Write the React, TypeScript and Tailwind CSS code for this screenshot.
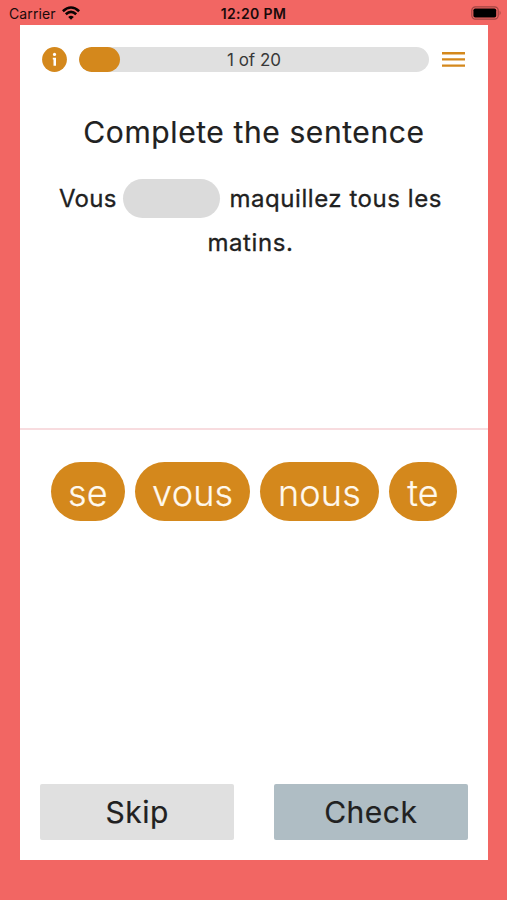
import React from "react";

const chips = [
  { word: "se", width: "w-[74.5px]" },
  { word: "vous", width: "w-[115px]" },
  { word: "nous", width: "w-[118.5px]" },
  { word: "te", width: "w-[68.5px]" },
];

function StatusBar() {
  return (
    <header className="grid h-[25px] grid-cols-3 items-center pt-[3px] text-[14px] leading-[22px] text-[#1a0b0b]">
      <div className="flex items-center gap-[6px] pl-[9px]">
        <span className="tracking-[0.1px]">Carrier</span>
        <svg className="-mt-[2px]" width="18" height="14" viewBox="0 0 18 14" fill="none" stroke="#0c0404" strokeWidth="2.6">
          <path d="M0.9 5.2Q9 -2.2 17.1 5.2" />
          <path d="M3.8 8.3Q9 3.4 14.2 8.3" />
          <path d="M6.2 10.9Q9 8.5 11.8 10.9L9 13.8Z" fill="#0c0404" stroke="none" />
        </svg>
      </div>
      <div className="text-center font-semibold tracking-[0.4px] whitespace-nowrap">12:20 PM</div>
      <div className="flex justify-end pr-[5px]">
        <svg className="-mt-[2px]" width="31" height="14" viewBox="0 0 31 14">
          <rect x="0.8" y="0.8" width="26.4" height="12.4" rx="3.6" fill="none" stroke="#a04442" strokeWidth="1.2" />
          <rect x="2.4" y="2.4" width="22.8" height="9.2" rx="1.8" fill="#000" />
          <path d="M28.6 4.6Q30.6 7 28.6 9.4Z" fill="#a04442" />
        </svg>
      </div>
    </header>
  );
}

function Toolbar() {
  return (
    <div className="flex h-[25px] items-center">
      <svg width="25" height="25" viewBox="0 0 25 25">
        <circle cx="12.5" cy="12.5" r="12.4" fill="#d4881c" />
        <circle cx="12.5" cy="7.4" r="1.6" fill="#fff" />
        <path d="M10.8 10.8H14V18.8H11.5V12.6H10.8Z" fill="#fff" />
      </svg>
      <div className="relative ml-3 h-[25px] w-[350px] overflow-hidden rounded-full bg-[#e0e0e0]">
        <div className="h-full w-[41px] rounded-full bg-[#d4881c]" />
        <span className="absolute inset-0 pt-px text-center text-[17px] leading-[25px] text-[#383838]">1 of 20</span>
      </div>
      <svg className="ml-[13px]" width="23" height="17" viewBox="0 0 23 17" stroke="#d4881c" strokeWidth="2.4">
        <path d="M0 2.2H23M0 8.4H23M0 14.6H23" />
      </svg>
    </div>
  );
}

export default function App() {
  return (
    <div className="h-[900px] w-[507px] bg-[#f26663] font-['Inter',sans-serif] text-[#212121]">
      <StatusBar />
      <main className="ml-[20.4px] flex h-[835.4px] w-[467.2px] flex-col bg-white">
        <section className="h-[403px] pt-[22px]">
          <div className="pl-[21.6px]">
            <Toolbar />
          </div>
          <h1 className="mt-[40px] text-center text-[30px] leading-[40px] tracking-[0.6px] [-webkit-text-stroke:0.2px]">Complete the sentence</h1>
          <div className="mt-[27px] flex h-[39px] items-center pl-[38.6px] text-[24px] tracking-[0.55px] [-webkit-text-stroke:0.3px]">
            <span className="w-[64px] pt-px tracking-[0.3px]">Vous</span>
            <span className="h-[39px] w-[97px] rounded-full bg-[#dbdbdb]" />
            <span className="ml-[9.5px] whitespace-nowrap pt-px">maquillez tous les</span>
          </div>
          <p className="mt-[6px] pr-[7px] text-center text-[24px] leading-[38px] tracking-[0.6px] [-webkit-text-stroke:0.3px]">matins.</p>
        </section>
        <div className="h-[2px] bg-[#f8dcdf]" />
        <section className="flex grow flex-col px-[19.5px] pb-[20.4px] pt-[32px]">
          <div className="flex justify-center gap-[10px]">
            {chips.map((chip) => (
              <button key={chip.word} className={`${chip.width} h-[59px] rounded-full bg-[#d4881c] pt-[3px] text-[36px] font-light leading-[56px] tracking-[0.2px] text-[#fff9ee] [-webkit-text-stroke:0.2px]`}>
                {chip.word}
              </button>
            ))}
          </div>
          <div className="mt-auto flex justify-between text-[30px] tracking-[0.5px] [-webkit-text-stroke:0.2px]">
            <button className="h-[56px] w-[194.5px] rounded-[2px] bg-[#e0e0e0]">Skip</button>
            <button className="h-[56px] w-[194.5px] rounded-[2px] bg-[#afbdc4]">Check</button>
          </div>
        </section>
      </main>
    </div>
  );
}
